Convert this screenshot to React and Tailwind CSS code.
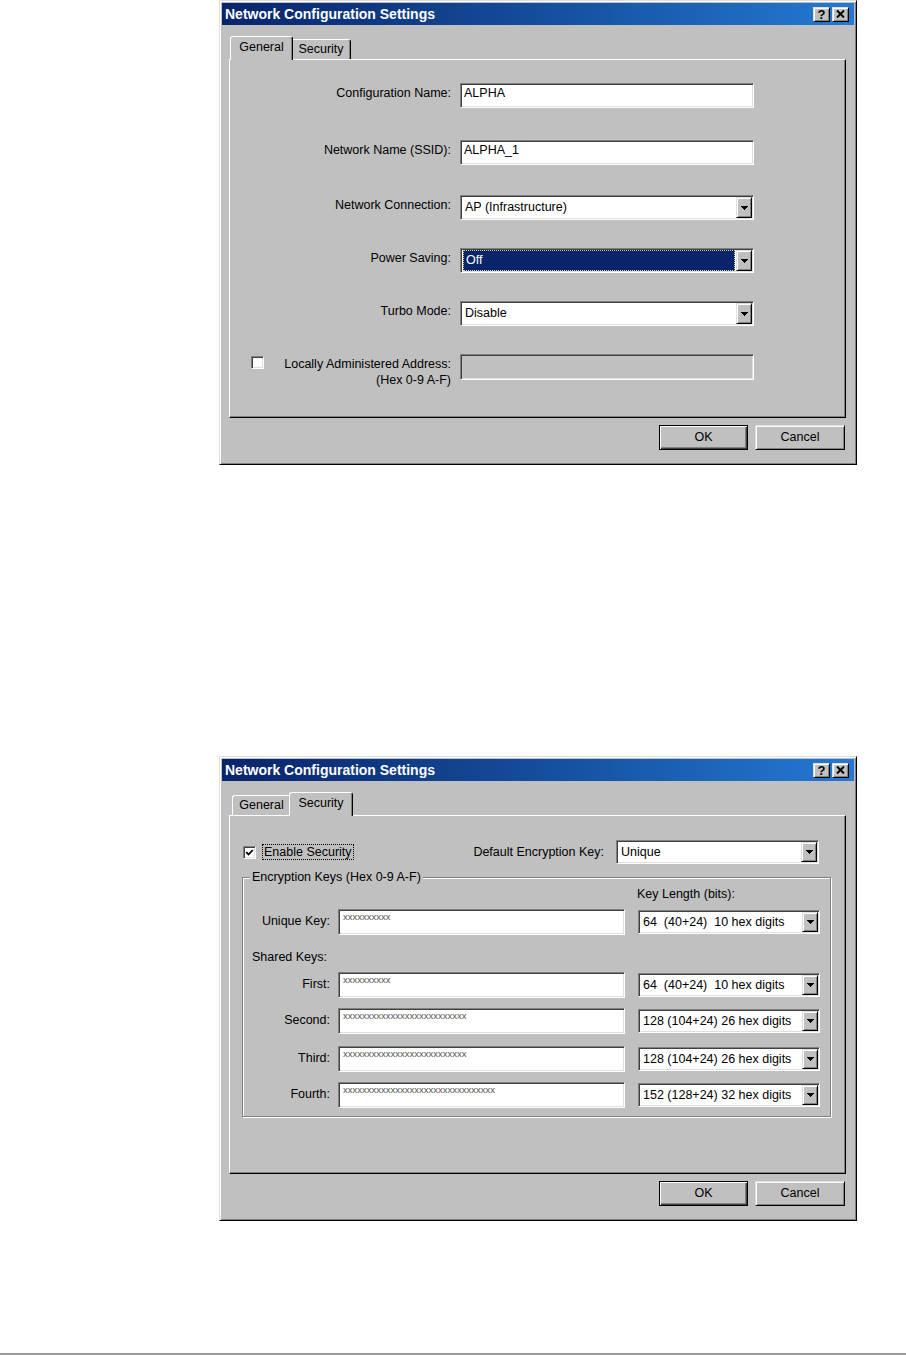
import React from 'react';

// classic 3D edges
const raised =
  'border border-t-[#dfdfdf] border-l-[#dfdfdf] border-r-black border-b-black shadow-[inset_1px_1px_0_#fff,inset_-1px_-1px_0_#808080]';
const sunken =
  'border border-t-[#808080] border-l-[#808080] border-r-white border-b-white shadow-[inset_1px_1px_0_#404040,inset_-1px_-1px_0_#dfdfdf]';

const Arrow = () => (
  <svg width="7" height="4" viewBox="0 0 7 4" shapeRendering="crispEdges">
    <path d="M0 0h7v1h-1v1h-1v1h-1v1h-1v-1h-1v-1h-1v-1h-1z" fill="#000" />
  </svg>
);

const TextField = ({ value, className, disabled }) => (
  <div className={`${sunken} ${disabled ? 'bg-[#c0c0c0]' : 'bg-white'} ${className} pl-[3px] pt-[1px] leading-[16px]`}>
    {value}
  </div>
);

const KeyField = ({ count }) => (
  <div className={`${sunken} bg-white w-[287px] h-[26px] pl-[4px] pt-[1px] leading-[12px] text-[9.5px] text-[#555]`}>
    {'x'.repeat(count)}
  </div>
);

const Select = ({ value, className, focused }) => (
  <div className={`${sunken} bg-white flex p-[1px] ${className}`}>
    <div className="flex-1 flex items-center min-w-0 pl-[1px]">
      {focused ? (
        <div className="flex-1 h-full flex items-center bg-[#0a246a] text-white border border-dotted border-[#d8d08a] pl-[2px] mr-[1px]">
          {value}
        </div>
      ) : (
        <span className="pl-[2px] whitespace-pre">{value}</span>
      )}
    </div>
    <div className={`${raised} bg-[#c0c0c0] w-[16px] h-full flex items-center justify-center`}>
      <Arrow />
    </div>
  </div>
);

const Checkbox = ({ checked }) => (
  <div className={`${sunken} bg-white w-[13px] h-[13px] shrink-0 flex items-center justify-center`}>
    {checked && (
      <svg width="9" height="9" viewBox="0 0 9 9">
        <path d="M1.2 4.2 L3.5 6.5 L7.8 2" fill="none" stroke="#000" strokeWidth="1.8" />
      </svg>
    )}
  </div>
);

const CapButton = ({ children }) => (
  <div className={`${raised} bg-[#c0c0c0] w-[17px] h-[15px] flex items-center justify-center`}>{children}</div>
);

// selected tab is 4px wider and overlaps its neighbours by 2px on each side
const Tab = ({ label, active, width, activeWidth }) =>
  active ? (
    <div
      className={`relative z-10 -mx-[2px] -mb-[1px] h-[24px] ${activeWidth} shrink-0 bg-[#c0c0c0] border-t border-l border-r border-t-white border-l-white border-r-black rounded-t-[3px] shadow-[inset_-1px_0_0_#808080] flex justify-center pt-[2px] leading-[16px]`}
    >
      {label}
    </div>
  ) : (
    <div
      className={`h-[20px] ${width} shrink-0 bg-[#c0c0c0] border-t border-l border-r border-t-white border-l-white border-r-black rounded-t-[3px] shadow-[inset_-1px_0_0_#808080] flex justify-center pt-[1px] leading-[16px]`}
    >
      {label}
    </div>
  );

const Dialog = ({ tab, children }) => (
  <div className="w-[638px] h-[465px] bg-[#c0c0c0] border border-t-[#dfdfdf] border-l-[#dfdfdf] border-r-black border-b-black shadow-[inset_1px_1px_0_#fff,inset_-1px_-1px_0_#808080] p-[2px] flex flex-col">
    {/* Title bar */}
    <div className="h-[22px] bg-linear-to-r from-[#0a246a] to-[#2479d2] flex items-center pl-[3px] pr-[5px]">
      <span className="text-white font-bold text-[14px] leading-none">Network Configuration Settings</span>
      <div className="ml-auto flex gap-[2px]">
        <CapButton>
          <span className="font-bold text-[13px] leading-none">?</span>
        </CapButton>
        <CapButton>
          <svg width="9" height="8" viewBox="0 0 9 8">
            <path d="M1 0.5 L8 7.5 M8 0.5 L1 7.5" stroke="#000" strokeWidth="2" />
          </svg>
        </CapButton>
      </div>
    </div>

    <div className="pl-[7px] pr-[8px] flex flex-col">
      {/* Tabs */}
      <div className="h-[34px] flex items-end pl-[3px]">
        <Tab label="General" width="w-[59px]" activeWidth="w-[63px]" active={tab === 'general'} />
        <Tab label="Security" width="w-[60px]" activeWidth="w-[64px]" active={tab === 'security'} />
      </div>

      {/* Panel */}
      <div className="h-[359px] border border-t-white border-l-white border-r-black border-b-black shadow-[inset_-1px_-1px_0_#808080]">
        {children}
      </div>

      {/* Buttons */}
      <div className="flex justify-end gap-[7px] mt-[7px] pr-[1px]">
        <div className="w-[89px] h-[25px] border border-black shadow-[inset_1px_1px_0_#fff,inset_-1px_-1px_0_#404040,inset_-2px_-2px_0_#808080] flex items-center justify-center">
          OK
        </div>
        <div className={`${raised} w-[90px] h-[25px] flex items-center justify-center`}>Cancel</div>
      </div>
    </div>
  </div>
);

const Row = ({ label, className = '', children }) => (
  <div className={`flex items-start ${className}`}>
    <div className="w-[221px] text-right pt-[2px] leading-[16px]">{label}</div>
    <div className="ml-[9px]">{children}</div>
  </div>
);

const GeneralTab = () => (
  <div className="flex flex-col pt-[23px]">
    <Row label="Configuration Name:">
      <TextField value="ALPHA" className="w-[294px] h-[25px]" />
    </Row>
    <Row label="Network Name (SSID):" className="mt-[32px]">
      <TextField value="ALPHA_1" className="w-[294px] h-[25px]" />
    </Row>
    <Row label="Network Connection:" className="mt-[30px]">
      <Select value="AP (Infrastructure)" className="w-[294px] h-[25px]" />
    </Row>
    <Row label="Power Saving:" className="mt-[28px]">
      <Select value="Off" focused className="w-[294px] h-[25px]" />
    </Row>
    <Row label="Turbo Mode:" className="mt-[28px]">
      <Select value="Disable" className="w-[294px] h-[25px]" />
    </Row>
    <div className="flex items-start mt-[28px]">
      <div className="w-[221px] flex items-start">
        <div className="ml-[21px] mt-[2px]">
          <Checkbox />
        </div>
        <div className="flex-1 text-right leading-[16px] mt-[2px]">
          Locally Administered Address:
          <br />
          (Hex 0-9 A-F)
        </div>
      </div>
      <TextField disabled className="ml-[9px] w-[294px] h-[26px]" />
    </div>
  </div>
);

const KeyRow = ({ label, count, length, className = '' }) => (
  <div className={`flex items-center ${className}`}>
    <div className="w-[87px] text-right leading-[16px] pb-[2px]">{label}</div>
    <div className="ml-[8px]">
      <KeyField count={count} />
    </div>
    <Select value={length} className="ml-[13px] w-[182px] h-[24px]" />
  </div>
);

const SecurityTab = () => (
  <div className="flex flex-col pt-[24px] pl-[12px]">
    <div className="flex items-center h-[24px] pl-[1px] mr-[26px]">
      <Checkbox checked />
      <span className="ml-[6px] px-[1px] border border-dotted border-black leading-[14px]">Enable Security</span>
      <span className="ml-auto">Default Encryption Key:</span>
      <Select value="Unique" className="ml-[12px] w-[203px] h-[24px]" />
    </div>

    <div className="relative mt-[13px] w-[589px] h-[240px] border border-[#808080] shadow-[1px_1px_0_#fff,inset_1px_1px_0_#fff]">
      <span className="absolute -top-[9px] left-[7px] px-[2px] bg-[#c0c0c0] leading-[16px]">
        Encryption Keys (Hex 0-9 A-F)
      </span>
      <div className="h-[31px] pl-[394px] pt-[9px] leading-[15px]">Key Length (bits):</div>
      <KeyRow label="Unique Key:" count={10} length="64  (40+24)  10 hex digits" />
      <div className="h-[37px] flex items-center pt-[7px] pl-[9px]">Shared Keys:</div>
      <KeyRow label="First:" count={10} length="64  (40+24)  10 hex digits" />
      <KeyRow label="Second:" count={26} length="128 (104+24) 26 hex digits" className="mt-[10px]" />
      <KeyRow label="Third:" count={26} length="128 (104+24) 26 hex digits" className="mt-[12px]" />
      <KeyRow label="Fourth:" count={32} length="152 (128+24) 32 hex digits" className="mt-[10px]" />
    </div>
  </div>
);

export default function App() {
  return (
    <div className="w-[906px] h-[1355px] bg-white font-['Liberation_Sans',Arial,sans-serif] text-[12.5px] text-black flex flex-col">
      <div className="pl-[219px]">
        <Dialog tab="general">
          <GeneralTab />
        </Dialog>
      </div>
      <div className="pl-[219px] mt-[291px]">
        <Dialog tab="security">
          <SecurityTab />
        </Dialog>
      </div>
      <div className="mt-auto h-[2px] bg-[#999]" />
    </div>
  );
}
